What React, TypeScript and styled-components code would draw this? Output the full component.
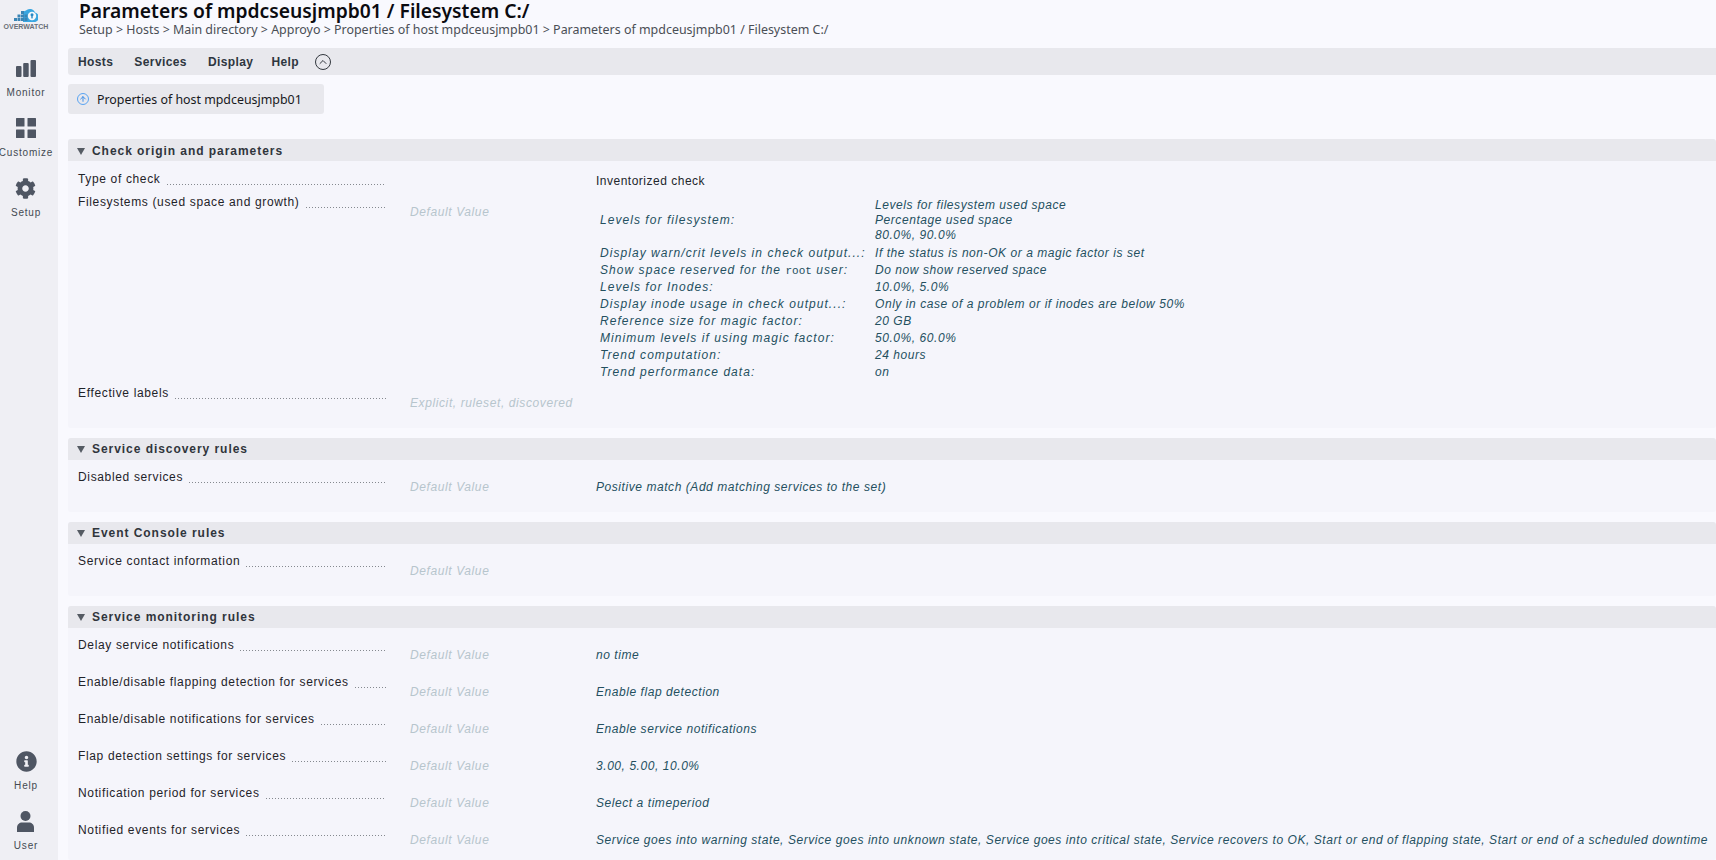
import React, { FC } from 'react';
import styled, { createGlobalStyle } from 'styled-components';
import { FaCog, FaInfoCircle } from 'react-icons/fa';
import { FiChevronUp, FiArrowUp } from 'react-icons/fi';

const GlobalStyle = createGlobalStyle`
  html, body { margin: 0; padding: 0; height: 100%; overflow: hidden; }
  body { background: #f9f9fe; font-family: "Liberation Sans", Arial, sans-serif; }
  #root { height: 100%; }
`;

const Page = styled.div`
  display: flex;
  height: 860px;
  overflow: hidden;
`;

const Sidebar = styled.nav`
  flex: 0 0 58px;
  min-width: 0;
  box-sizing: border-box;
  padding-right: 6px;
  background: #efeff4;
  display: flex;
  flex-direction: column;
  align-items: center;
`;

const LogoBox = styled.div`
  height: 58px;
  padding-top: 8px;
  box-sizing: border-box;
  display: flex;
  flex-direction: column;
  align-items: center;
`;

const LogoText = styled.span`
  font-size: 7px;
  font-weight: 700;
  color: #6a6f78;
  line-height: 8px;
  margin-top: 1px;
`;

const NavItem = styled.div<{ $last?: boolean }>`
  height: ${p => (p.$last ? 49 : 60)}px;
  display: flex;
  flex-direction: column;
  align-items: center;
  color: #4f5663;
  white-space: nowrap;
`;

const NavIcon = styled.div`
  height: 22px;
  display: flex;
  align-items: center;
  justify-content: center;
  margin-top: -1px;
  margin-bottom: 7px;
`;

const NavLabel = styled.span`
  font-size: 10px;
  line-height: 14px;
  letter-spacing: 0.8px;
  color: #444a52;
`;

const Spacer = styled.div`
  flex: 1;
`;

const Main = styled.main`
  flex: 1;
  min-width: 0;
  padding-left: 10px;
`;

const TitleBlock = styled.header`
  padding-left: 11px;
  height: 48px;
`;

const Title = styled.h1`
  margin: 0;
  font-family: "Noto Sans", sans-serif;
  font-size: 19.25px;
  line-height: 22px;
  font-weight: 600;
  color: #0b0b10;
  white-space: nowrap;
`;

const Breadcrumb = styled.div`
  font-family: "Noto Sans", sans-serif;
  font-size: 12.45px;
  line-height: 15px;
  color: #4a4e55;
  white-space: nowrap;
`;

const MenuBar = styled.div`
  height: 27px;
  background: #e8e8ed;
  border-radius: 3px 0 0 3px;
  display: flex;
  align-items: center;
  padding-left: 10px;
`;

const MenuItem = styled.span<{ $gap: number }>`
  margin-right: ${p => p.$gap}px;
  font-size: 12px;
  font-weight: 700;
  letter-spacing: 0.4px;
  color: #2e3640;
`;

const CollapseButton = styled.span`
  width: 16px;
  height: 16px;
  box-sizing: border-box;
  border: 1px solid #33383f;
  border-radius: 50%;
  display: flex;
  align-items: center;
  justify-content: center;
  color: #33383f;
`;

const HostButton = styled.div`
  margin-top: 9px;
  width: 256px;
  height: 30px;
  box-sizing: border-box;
  background: #e8e8ed;
  border-radius: 3px;
  display: flex;
  align-items: center;
  padding-left: 9px;
  gap: 8px;
  font-family: "Noto Sans", sans-serif;
  font-size: 12.4px;
  color: #17181c;
  margin-bottom: 25px;
`;

const UpBadge = styled.span`
  width: 12px;
  height: 12px;
  box-sizing: border-box;
  border: 1.5px solid #5aa4f2;
  border-radius: 50%;
  display: flex;
  align-items: center;
  justify-content: center;
  color: #3f8fe8;
`;

const Section = styled.section<{ $height: number }>`
  height: ${p => p.$height}px;
  background: #f5f5fb;
  border-radius: 3px;
  margin-bottom: 10px;
`;

const SectionHeader = styled.div<{ $pad?: number }>`
  height: 22px;
  box-sizing: border-box;
  padding-top: ${p => p.$pad || 0}px;
  background: #e8e8ed;
  border-radius: 3px 3px 0 0;
  display: flex;
  align-items: center;
  padding-left: 9px;
  gap: 7px;
  font-size: 12px;
  font-weight: 700;
  letter-spacing: 0.95px;
  color: #30353c;
`;

const Triangle = styled.span`
  width: 0;
  height: 0;
  border-left: 4.5px solid transparent;
  border-right: 4.5px solid transparent;
  border-top: 7px solid #555b63;
  margin-top: 1px;
`;

const Row = styled.div<{ $height: number; $pad?: number }>`
  display: grid;
  grid-template-columns: 330px 188px 1fr;
  height: ${p => p.$height}px;
  box-sizing: border-box;
  padding-top: ${p => p.$pad || 0}px;
  padding-left: 10px;
`;

const LabelCell = styled.div`
  display: flex;
  align-items: flex-end;
  height: 16px;
  font-size: 12px;
  line-height: 16px;
  letter-spacing: 0.65px;
  color: #1f2329;
  padding-right: 22px;
  padding-top: 9px;
  white-space: nowrap;
`;

const Leader = styled.span`
  flex: 1;
  height: 1px;
  margin-left: 6px;
  margin-bottom: 2px;
  background-image: linear-gradient(to right, #85898f 1px, transparent 1px);
  background-size: 3px 1px;
`;

const DefaultCell = styled.div<{ $top: number }>`
  padding-top: ${p => p.$top}px;
  padding-left: 2px;
  font-size: 12px;
  line-height: 16px;
  font-style: italic;
  letter-spacing: 0.6px;
  color: #b7c5cd;
  white-space: nowrap;
`;

const ValueCell = styled.div<{ $plain?: boolean; $top: number }>`
  padding-top: ${p => p.$top}px;
  font-size: 12px;
  line-height: 16px;
  font-style: ${p => (p.$plain ? 'normal' : 'italic')};
  letter-spacing: ${p => (p.$plain ? 0.5 : 0.56)}px;
  color: ${p => (p.$plain ? '#22262c' : '#24505f')};
  white-space: nowrap;
`;

const ParamTable = styled.table`
  border-collapse: collapse;
  margin-left: 4px;
  margin-top: -1px;
  td {
    padding: 0;
    height: 17px;
    line-height: 15px;
  }
  td:first-child {
    width: 275px;
    letter-spacing: 1.05px;
  }
  tr:first-child td {
    padding-bottom: 2px;
  }
`;

const Code = styled.code`
  font-family: "Liberation Mono", monospace;
  font-size: 11px;
  font-style: normal;
  letter-spacing: 0;
`;

const BarsIcon: FC = () => (
  <svg width="20" height="17" viewBox="0 0 20 17" fill="#4f5663">
    <rect x="0" y="6" width="5.5" height="11" rx="1" />
    <rect x="7.2" y="3" width="5.5" height="14" rx="1" />
    <rect x="14.5" y="0" width="5.5" height="17" rx="1" />
  </svg>
);

const GridIcon: FC = () => (
  <svg width="20" height="20" viewBox="0 0 20 20" fill="#4f5663">
    <rect x="0" y="0" width="8.5" height="8.5" rx="0.5" />
    <rect x="11.5" y="0" width="8.5" height="8.5" rx="0.5" />
    <rect x="0" y="11.5" width="8.5" height="8.5" rx="0.5" />
    <rect x="11.5" y="11.5" width="8.5" height="8.5" rx="0.5" />
  </svg>
);

const UserIcon: FC = () => (
  <svg width="17" height="21" viewBox="0 0 17 21" fill="#4f5663">
    <circle cx="8.5" cy="5" r="5" />
    <path d="M0 21v-4.5C0 13.5 2.5 11.5 5 11.5h7c2.500 0 5 2 5 5V21z" />
  </svg>
);

const CloudLogo: FC = () => (
  <svg width="24" height="14" viewBox="0 0 24 14">
    <path d="M9 5a3.500 3.500 0 0 1 3-2.500A5.500 5.500 0 0 1 21 4.500 4.800 4.800 0 0 1 19 14H9z" fill="#3aa6e0" />
    <g fill="#3a85b5">
      <rect x="0" y="10" width="3" height="3" />
      <rect x="3.500" y="10" width="3" height="3" />
      <rect x="7" y="10" width="3" height="3" />
      <rect x="3.500" y="6.500" width="3" height="3" />
      <rect x="7" y="6.500" width="3" height="3" />
      <rect x="7" y="3" width="3" height="3" />
      <rect x="10.500" y="6.500" width="3" height="3" />
      <rect x="10.500" y="10" width="3" height="3" />
    </g>
    <circle cx="18" cy="8" r="4.200" fill="#f4f8fb" />
    <circle cx="18" cy="6.800" r="1.500" fill="#2a88c4" />
    <rect x="17.300" y="7" width="1.400" height="3.400" fill="#2a88c4" />
  </svg>
);

const params: { label: React.ReactNode; value: React.ReactNode }[] = [
  {
    label: 'Levels for filesystem:',
    value: (
      <>
        Levels for filesystem used space
        <br />
        Percentage used space
        <br />
        80.0%, 90.0%
      </>
    ),
  },
  { label: 'Display warn/crit levels in check output...:', value: 'If the status is non-OK or a magic factor is set' },
  {
    label: (
      <>
        Show space reserved for the <Code>root</Code> user:
      </>
    ),
    value: 'Do now show reserved space',
  },
  { label: 'Levels for Inodes:', value: '10.0%, 5.0%' },
  { label: 'Display inode usage in check output...:', value: 'Only in case of a problem or if inodes are below 50%' },
  { label: 'Reference size for magic factor:', value: '20 GB' },
  { label: 'Minimum levels if using magic factor:', value: '50.0%, 60.0%' },
  { label: 'Trend computation:', value: '24 hours' },
  { label: 'Trend performance data:', value: 'on' },
];

const monitoring: [string, string][] = [
  ['Delay service notifications', 'no time'],
  ['Enable/disable flapping detection for services', 'Enable flap detection'],
  ['Enable/disable notifications for services', 'Enable service notifications'],
  ['Flap detection settings for services', '3.00, 5.00, 10.0%'],
  ['Notification period for services', 'Select a timeperiod'],
  [
    'Notified events for services',
    'Service goes into warning state, Service goes into unknown state, Service goes into critical state, Service recovers to OK, Start or end of flapping state, Start or end of a scheduled downtime',
  ],
];

const Label: FC<{ text: string }> = ({ text }) => (
  <LabelCell>
    {text}
    <Leader />
  </LabelCell>
);

const App: FC = () => (
  <Page>
    <GlobalStyle />
    <Sidebar>
      <LogoBox>
        <CloudLogo />
        <LogoText>OVERWATCH</LogoText>
      </LogoBox>
      <NavItem>
        <NavIcon>
          <BarsIcon />
        </NavIcon>
        <NavLabel>Monitor</NavLabel>
      </NavItem>
      <NavItem>
        <NavIcon>
          <GridIcon />
        </NavIcon>
        <NavLabel>Customize</NavLabel>
      </NavItem>
      <NavItem>
        <NavIcon>
          <FaCog size={21} />
        </NavIcon>
        <NavLabel>Setup</NavLabel>
      </NavItem>
      <Spacer />
      <NavItem>
        <NavIcon>
          <FaInfoCircle size={21} />
        </NavIcon>
        <NavLabel>Help</NavLabel>
      </NavItem>
      <NavItem $last>
        <NavIcon>
          <UserIcon />
        </NavIcon>
        <NavLabel>User</NavLabel>
      </NavItem>
    </Sidebar>
    <Main>
      <TitleBlock>
        <Title>Parameters of mpdcseusjmpb01 / Filesystem C:/</Title>
        <Breadcrumb>
          Setup &gt; Hosts &gt; Main directory &gt; Approyo &gt; Properties of host mpdceusjmpb01 &gt; Parameters of
          mpdceusjmpb01 / Filesystem C:/
        </Breadcrumb>
      </TitleBlock>
      <MenuBar>
        <MenuItem $gap={21}>Hosts</MenuItem>
        <MenuItem $gap={21}>Services</MenuItem>
        <MenuItem $gap={18}>Display</MenuItem>
        <MenuItem $gap={16}>Help</MenuItem>
        <CollapseButton>
          <FiChevronUp size={12} />
        </CollapseButton>
      </MenuBar>
      <HostButton>
        <UpBadge>
          <FiArrowUp size={8} strokeWidth={3} />
        </UpBadge>
        Properties of host mpdceusjmpb01
      </HostButton>
      <Section $height={289}>
        <SectionHeader $pad={1}>
          <Triangle />
          Check origin and parameters
        </SectionHeader>
        <Row $height={24} $pad={1}>
          <Label text="Type of check" />
          <DefaultCell $top={0} />
          <ValueCell $plain $top={11}>
            Inventorized check
          </ValueCell>
        </Row>
        <Row $height={191}>
          <Label text="Filesystems (used space and growth)" />
          <DefaultCell $top={19}>Default Value</DefaultCell>
          <ValueCell $top={14}>
            <ParamTable>
              <tbody>
                {params.map((p, i) => (
                  <tr key={i}>
                    <td>{p.label}</td>
                    <td>{p.value}</td>
                  </tr>
                ))}
              </tbody>
            </ParamTable>
          </ValueCell>
        </Row>
        <Row $height={52}>
          <Label text="Effective labels" />
          <DefaultCell $top={19}>Explicit, ruleset, discovered</DefaultCell>
          <ValueCell $top={0} />
        </Row>
      </Section>
      <Section $height={74}>
        <SectionHeader>
          <Triangle />
          Service discovery rules
        </SectionHeader>
        <Row $height={52}>
          <Label text="Disabled services" />
          <DefaultCell $top={19}>Default Value</DefaultCell>
          <ValueCell $top={19}>Positive match (Add matching services to the set)</ValueCell>
        </Row>
      </Section>
      <Section $height={74}>
        <SectionHeader>
          <Triangle />
          Event Console rules
        </SectionHeader>
        <Row $height={52}>
          <Label text="Service contact information" />
          <DefaultCell $top={19}>Default Value</DefaultCell>
          <ValueCell $top={0} />
        </Row>
      </Section>
      <Section $height={254}>
        <SectionHeader>
          <Triangle />
          Service monitoring rules
        </SectionHeader>
        {monitoring.map(([label, value]) => (
          <Row $height={37} key={label}>
            <Label text={label} />
            <DefaultCell $top={19}>Default Value</DefaultCell>
            <ValueCell $top={19}>{value}</ValueCell>
          </Row>
        ))}
      </Section>
    </Main>
  </Page>
);

export default App;
